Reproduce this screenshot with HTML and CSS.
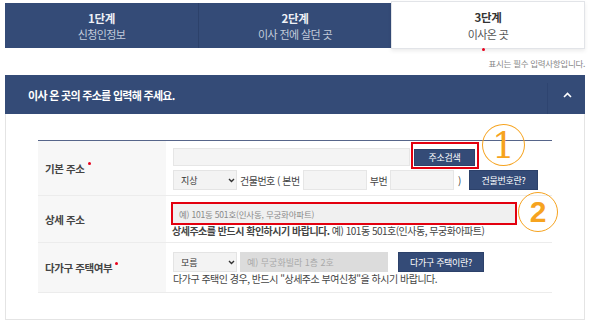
FILE: index.html
```html
<!DOCTYPE html>
<html lang="ko">
<head>
<meta charset="utf-8">
<title>이사 온 곳</title>
<link rel="stylesheet" href="styles.css">
</head>
<body>
<div class="page">
  <div class="steps">
    <div class="step"><b>1단계</b><span>신청인정보</span></div>
    <div class="step"><b>2단계</b><span>이사 전에 살던 곳</span></div>
    <div class="step active"><b>3단계</b><span>이사온 곳</span></div>
  </div>
  <p class="req"><i class="dot"></i>표시는 필수 입력사항입니다.</p>
  <div class="panel-head">
    <h2>이사 온 곳의 주소를 입력해 주세요.</h2>
    <div class="toggle"><svg width="9" height="6" viewBox="0 0 9 6"><path d="M1 5 L4.5 1.5 L8 5" fill="none" stroke="#fff" stroke-width="1.6"/></svg></div>
  </div>
  <div class="panel">
    <div class="form">
      <div class="row r1">
        <div class="label">기본 주소<i class="dot"></i></div>
        <div class="field">
          <div class="line">
            <div class="input wide"></div>
            <span class="hl"><span class="btn search">주소검색</span></span>
          </div>
          <div class="line">
            <div class="select">지상<svg width="7" height="5" viewBox="0 0 7 5"><path d="M1 1 L3.5 3.5 L6 1" fill="none" stroke="#333" stroke-width="1.4"/></svg></div>
            <span class="txt t1">건물번호 ( 본번</span>
            <div class="input num"></div>
            <span class="txt t2">부번</span>
            <div class="input num"></div>
            <span class="txt t3">)</span>
            <span class="btn bnum">건물번호란?</span>
          </div>
        </div>
      </div>
      <div class="row r2">
        <div class="label">상세 주소</div>
        <div class="field">
          <div class="input detail">예) 101동 501호(인사동, 무궁화아파트)</div>
          <p class="help"><b>상세주소를 반드시 확인하시기 바랍니다.</b> 예) 101동 501호(인사동, 무궁화아파트)</p>
        </div>
      </div>
      <div class="row r3">
        <div class="label">다가구 주택여부<i class="dot"></i></div>
        <div class="field">
          <div class="line">
            <div class="select">모름<svg width="7" height="5" viewBox="0 0 7 5"><path d="M1 1 L3.5 3.5 L6 1" fill="none" stroke="#333" stroke-width="1.4"/></svg></div>
            <div class="input gray">예) 무궁화빌라 1층 2호</div>
            <span class="btn multi">다가구 주택이란?</span>
          </div>
          <p class="help2">다가구 주택인 경우, 반드시 "상세주소 부여신청"을 하시기 바랍니다.</p>
        </div>
      </div>
    </div>
  </div>
  <div class="mark m1">1</div>
  <div class="mark m2">2</div>
</div>
</body>
</html>
```
FILE: styles.css
```css
* { box-sizing: border-box; }
html, body { margin: 0; padding: 0; background: #fff; }
body { font-family: "Noto Sans CJK KR", "Noto Sans", sans-serif; color: #333; }
.page { position: relative; width: 594px; height: 326px; padding: 3px 9px 0 5px; }

.steps { display: flex; height: 45px; }
.step { width: 193px; background: #344b77; display: flex; flex-direction: column; align-items: center; justify-content: center; color: #c3cbdb; padding-top: 1px; }
.step + .step { border-left: 1px solid #2c416a; }
.step b { font-size: 11.5px; line-height: 16.7px; color: #eef1f6; font-weight: 700; letter-spacing: -0.3px; }
.step span { font-size: 11px; line-height: 16px; letter-spacing: -0.6px; }
.step.active { width: 194px; background: #fff; border: 1px solid #e2e4e8; margin: -2px 0 -1px 0; box-shadow: 0 2px 4px rgba(0,0,0,0.08); color: #555; }
.step.active b { color: #333; }

.req { margin: 0; height: 27px; display: flex; justify-content: flex-end; align-items: flex-end; padding-bottom: 5px; font-size: 8.5px; line-height: 13px; color: #888; letter-spacing: -0.3px; }
.req .dot { margin-right: 4px; align-self: flex-start; margin-top: 0; }
.dot { display: inline-block; width: 3px; height: 3px; border-radius: 50%; background: #e8001c; }

.panel-head { height: 39px; background: #344b77; display: flex; align-items: stretch; justify-content: space-between; }
.panel-head h2 { margin: 0; padding-left: 23px; font-size: 11px; font-weight: 700; color: #fff; display: flex; align-items: center; letter-spacing: -0.7px; }
.toggle { width: 38px; margin-top: 8px; border-left: 1px solid #2e4470; display: flex; align-items: center; justify-content: center; padding-bottom: 8px; padding-left: 2px; }

.panel { height: 206px; border: 1px solid #e4e4e4; border-top: 0; padding: 26px 32px 0 32px; }
.form { border-top: 1px solid #56658a; }
.row { display: grid; grid-template-columns: 128px 1fr; border-bottom: 1px solid #ececec; }
.label { background: #f7f7f7; display: flex; align-items: center; padding-left: 7px; font-size: 10.5px; font-weight: 700; color: #444; letter-spacing: -0.4px; }
.label .dot { margin: 0 0 9px 3px; }
.field { padding-left: 7px; font-size: 10px; color: #444; }
.r1 { height: 55px; }
.r1 .field { padding-top: 7px; }
.r2 { height: 47px; }
.r2 .field { padding-top: 6px; }
.r3 { height: 50px; }
.r3 .field { padding-top: 9px; }

.line { display: flex; align-items: center; }
.r1 .line + .line { margin-top: 4px; }
.input { background: #f4f4f4; border: 1px solid #e6e6e6; height: 20px; }
.input.wide { width: 237px; height: 18px; }
.input.num { width: 64px; }
.select { width: 64px; height: 20px; background: #f3f3f3; border: 1px solid #e4e4e4; display: flex; align-items: center; justify-content: space-between; padding: 0 1px 0 7px; font-size: 9px; color: #333; }
.txt { font-size: 10px; color: #444; letter-spacing: -0.5px; white-space: nowrap; }
.t1 { margin: 0 3px 0 3px; }
.t2 { margin: 0 3px 0 3px; }
.t3 { margin: 0 8px 0 4px; }

.btn { background: #344b77; color: #fff; font-size: 9px; height: 20px; display: inline-flex; align-items: center; justify-content: center; letter-spacing: -0.3px; border: 1px solid #2c416a; }
.hl { position: relative; margin-left: 4px; display: inline-flex; }
.hl::after { content: ""; position: absolute; left: -3px; right: -4px; top: -7px; bottom: -3px; border: 2px solid #e3000f; }
.search { width: 61px; height: 17px; }
.bnum { width: 69px; }
.multi { width: 86px; margin-left: 10px; }

.input.detail { margin-left: -2px; width: 346px; height: 23px; border: 2px solid #e3000f; background: #f0f0f0; font-size: 8.5px; color: #888; display: flex; align-items: center; padding-left: 6px; letter-spacing: -0.2px; }
.help { margin: 0 0 0 -1px; font-size: 10px; line-height: 12px; color: #444; letter-spacing: -0.5px; white-space: nowrap; }
.help b { font-weight: 700; }
.input.gray { width: 148px; margin-left: 3px; background: #dcdcdc; border-color: #dcdcdc; font-size: 9px; color: #a9a9a9; display: flex; align-items: center; padding-left: 6px; }
.help2 { margin: 1px 0 0 0; font-size: 10px; line-height: 12px; color: #444; letter-spacing: -0.5px; white-space: nowrap; }

.mark { position: absolute; border: 1.5px solid #f6a31f; border-radius: 50%; color: #f6a31f; display: flex; align-items: center; justify-content: center; }
.m1 { left: 482px; top: 124px; width: 43px; height: 42px; font-size: 36px; font-weight: 400; font-family: "DejaVu Serif", serif; padding-top: 1px; }
.m2 { left: 518px; top: 192px; width: 40px; height: 40px; font-size: 30px; font-weight: 700; font-family: "Liberation Sans", sans-serif; }
```
